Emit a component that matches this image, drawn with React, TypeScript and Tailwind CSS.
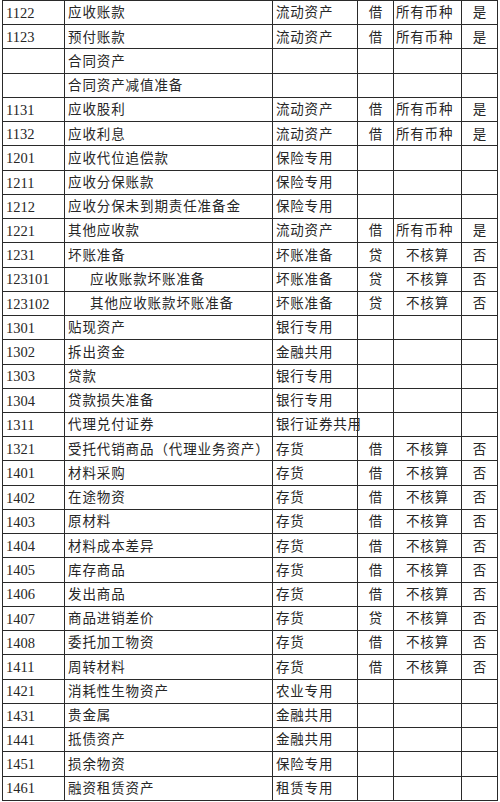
import React from 'react';

// 科目行：编号、名称、类别、方向、币种、是否外币
type Row = {
  code?: string;
  name: string;
  indent?: boolean;
  kind?: string;
  dir?: string;
  cur?: string;
  flag?: string;
};

const ALL = '所有币种';
const NONE = '不核算';

const ROWS: Row[] = [
  { code: '1122', name: '应收账款', kind: '流动资产', dir: '借', cur: ALL, flag: '是' },
  { code: '1123', name: '预付账款', kind: '流动资产', dir: '借', cur: ALL, flag: '是' },
  { name: '合同资产' },
  { name: '合同资产减值准备' },
  { code: '1131', name: '应收股利', kind: '流动资产', dir: '借', cur: ALL, flag: '是' },
  { code: '1132', name: '应收利息', kind: '流动资产', dir: '借', cur: ALL, flag: '是' },
  { code: '1201', name: '应收代位追偿款', kind: '保险专用' },
  { code: '1211', name: '应收分保账款', kind: '保险专用' },
  { code: '1212', name: '应收分保未到期责任准备金', kind: '保险专用' },
  { code: '1221', name: '其他应收款', kind: '流动资产', dir: '借', cur: ALL, flag: '是' },
  { code: '1231', name: '坏账准备', kind: '坏账准备', dir: '贷', cur: NONE, flag: '否' },
  { code: '123101', name: '应收账款坏账准备', indent: true, kind: '坏账准备', dir: '贷', cur: NONE, flag: '否' },
  { code: '123102', name: '其他应收账款坏账准备', indent: true, kind: '坏账准备', dir: '贷', cur: NONE, flag: '否' },
  { code: '1301', name: '贴现资产', kind: '银行专用' },
  { code: '1302', name: '拆出资金', kind: '金融共用' },
  { code: '1303', name: '贷款', kind: '银行专用' },
  { code: '1304', name: '贷款损失准备', kind: '银行专用' },
  { code: '1311', name: '代理兑付证券', kind: '银行证券共用' },
  { code: '1321', name: '受托代销商品（代理业务资产）', kind: '存货', dir: '借', cur: NONE, flag: '否' },
  { code: '1401', name: '材料采购', kind: '存货', dir: '借', cur: NONE, flag: '否' },
  { code: '1402', name: '在途物资', kind: '存货', dir: '借', cur: NONE, flag: '否' },
  { code: '1403', name: '原材料', kind: '存货', dir: '借', cur: NONE, flag: '否' },
  { code: '1404', name: '材料成本差异', kind: '存货', dir: '借', cur: NONE, flag: '否' },
  { code: '1405', name: '库存商品', kind: '存货', dir: '借', cur: NONE, flag: '否' },
  { code: '1406', name: '发出商品', kind: '存货', dir: '借', cur: NONE, flag: '否' },
  { code: '1407', name: '商品进销差价', kind: '存货', dir: '贷', cur: NONE, flag: '否' },
  { code: '1408', name: '委托加工物资', kind: '存货', dir: '借', cur: NONE, flag: '否' },
  { code: '1411', name: '周转材料', kind: '存货', dir: '借', cur: NONE, flag: '否' },
  { code: '1421', name: '消耗性生物资产', kind: '农业专用' },
  { code: '1431', name: '贵金属', kind: '金融共用' },
  { code: '1441', name: '抵债资产', kind: '金融共用' },
  { code: '1451', name: '损余物资', kind: '保险专用' },
  { code: '1461', name: '融资租赁资产', kind: '租赁专用' },
];

const cjk = "font-['Liberation_Serif','Noto_Sans_CJK_SC',serif]";

export default function App() {
  return (
    <div className="w-[500px] h-[802px] bg-white overflow-hidden">
      <div className={`ml-[2px] w-[496px] border-t border-l border-[#2a2a2a] text-[#262626] ${cjk}`}>
        {ROWS.map((r, i) => (
          <div key={i} className="flex h-[24.24px] border-b border-[#2a2a2a] items-center text-[13.5px] leading-none">
            <div className="w-[62px] h-full flex items-center pl-[3px] pt-[1px] border-r border-[#2a2a2a] text-[14.5px]">
              {r.code}
            </div>
            <div
              className={`w-[208px] h-full flex items-center pt-[1px] border-r border-[#2a2a2a] whitespace-nowrap tracking-[0.9px] ${
                r.indent ? 'pl-[25px]' : 'pl-[3px]'
              }`}
            >
              {r.name}
            </div>
            <div className="w-[85px] h-full flex items-center pl-[3px] pt-[1px] border-r border-[#2a2a2a] whitespace-nowrap tracking-[0.8px]">
              {r.kind}
            </div>
            <div className="w-[36px] h-full flex items-center justify-center pt-[1px] border-r border-[#2a2a2a]">
              {r.dir}
            </div>
            <div
              className={`w-[68px] h-full flex items-center pt-[1px] border-r border-[#2a2a2a] whitespace-nowrap tracking-[0.8px] ${
                r.cur === ALL ? 'pl-[2px]' : 'justify-center'
              }`}
            >
              {r.cur}
            </div>
            <div className="w-[36px] h-full flex items-center justify-center pt-[1px] border-r border-[#2a2a2a]">
              {r.flag}
            </div>
          </div>
        ))}
      </div>
    </div>
  );
}
